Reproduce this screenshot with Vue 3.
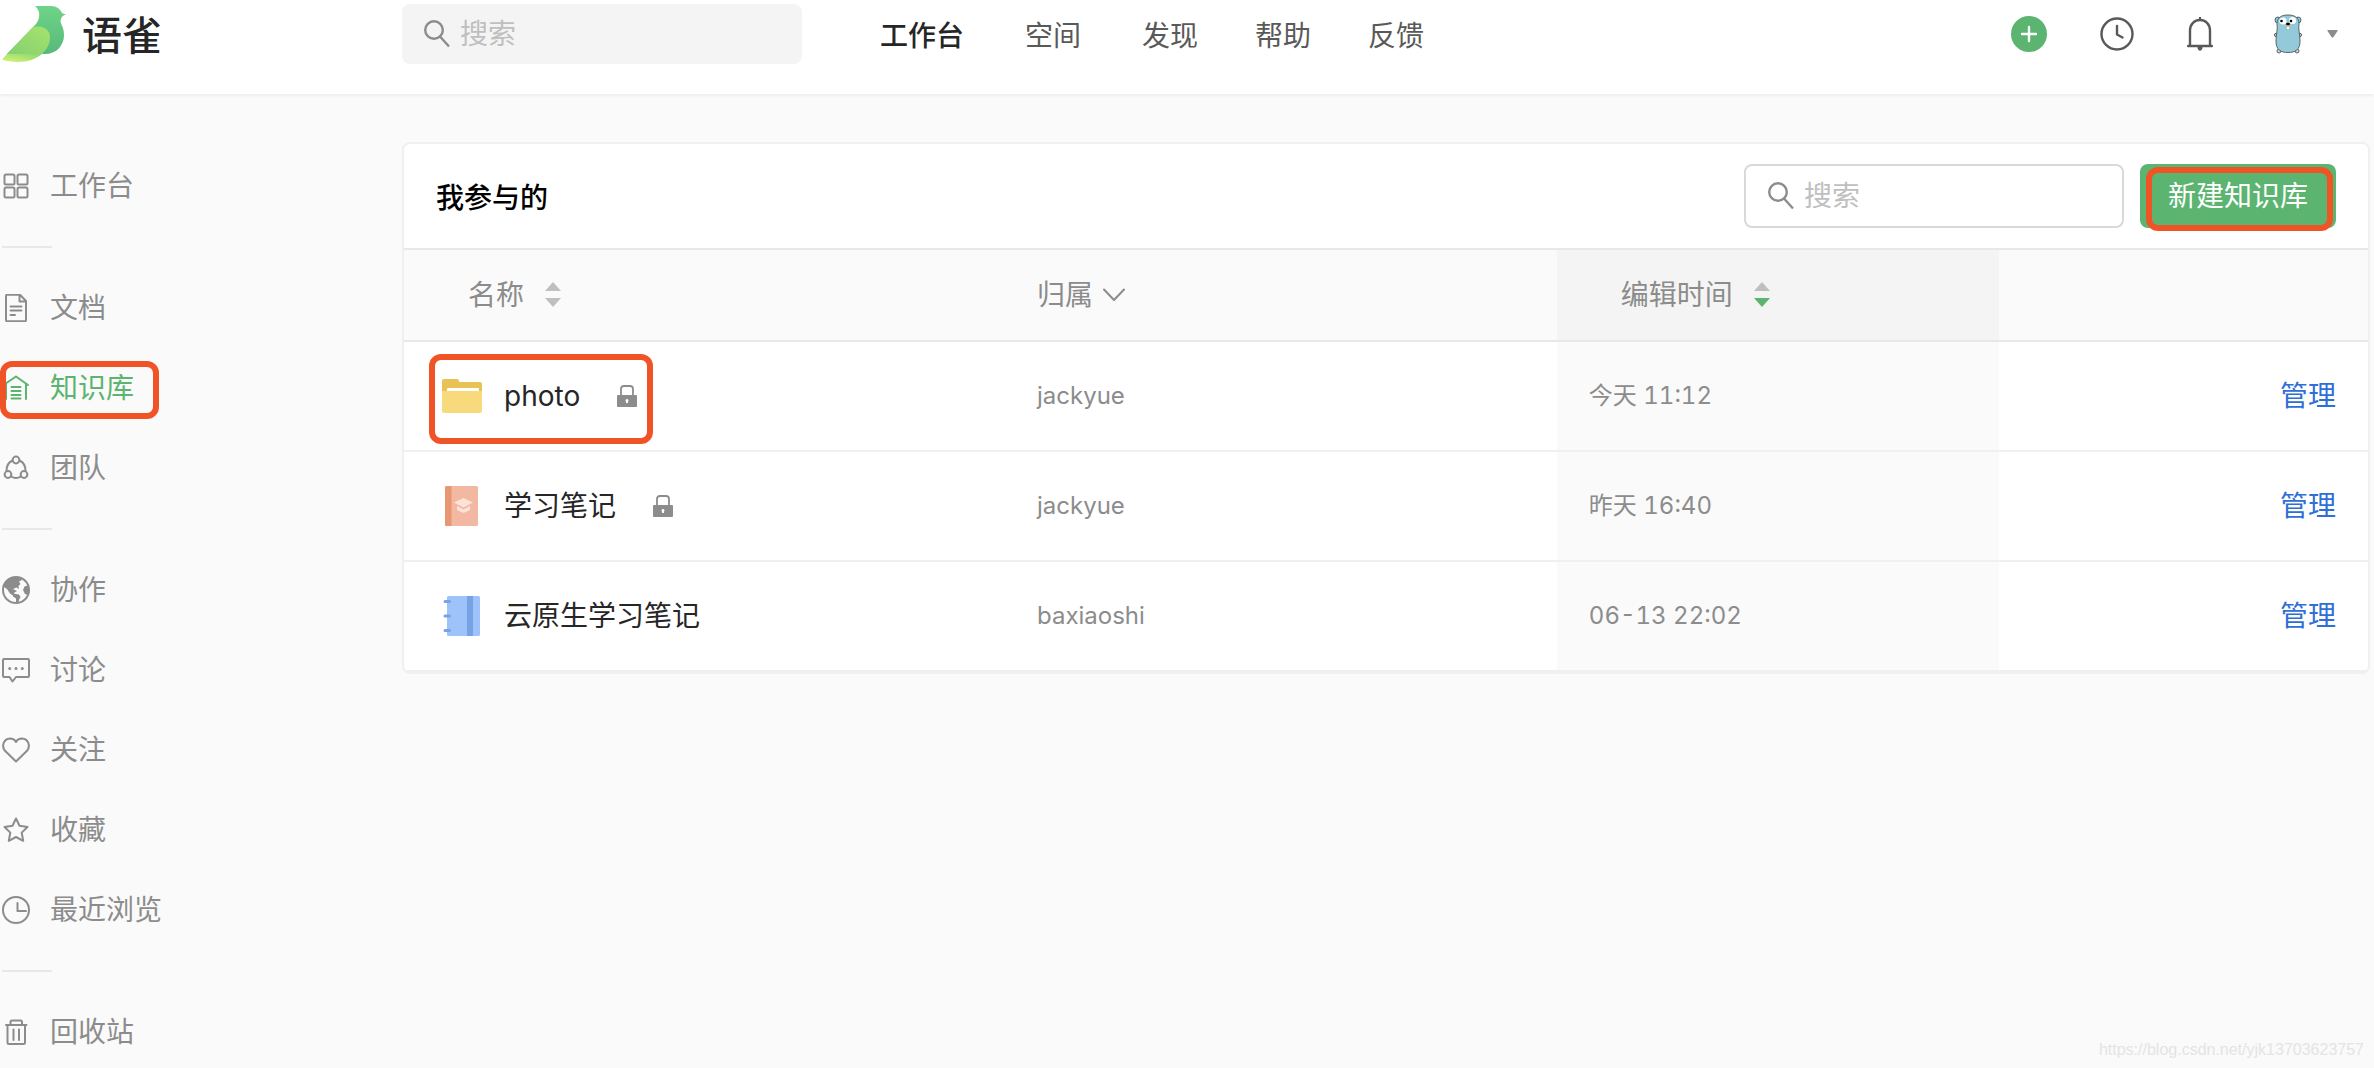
<script setup>
import { ref } from 'vue'

const nav = [
  { label: '工作台', active: true },
  { label: '空间', wide: true },
  { label: '发现' },
  { label: '帮助' },
  { label: '反馈' },
]

const groups = [
  [{ label: '工作台', icon: 'grid' }],
  [
    { label: '文档', icon: 'doc' },
    { label: '知识库', icon: 'repo', active: true },
    { label: '团队', icon: 'team' },
  ],
  [
    { label: '协作', icon: 'globe' },
    { label: '讨论', icon: 'chat' },
    { label: '关注', icon: 'heart' },
    { label: '收藏', icon: 'star' },
    { label: '最近浏览', icon: 'recent' },
  ],
  [{ label: '回收站', icon: 'trash' }],
]

const repos = [
  { name: 'photo', icon: 'folder', locked: true, owner: 'jackyue', time: '今天 11:12', marked: true },
  { name: '学习笔记', icon: 'book', locked: true, owner: 'jackyue', time: '昨天 16:40' },
  { name: '云原生学习笔记', icon: 'notebook', locked: false, owner: 'baxiaoshi', time: '06-13 22:02' },
]

const siteQuery = ref('')
const repoQuery = ref('')
</script>

<template>
  <div class="page">
    <header class="header">
      <a class="brand" href="#">
        <svg class="brand-mark" viewBox="0 0 64 56" aria-hidden="true">
          <defs>
            <linearGradient id="bird-body" x1="0" y1="0" x2="0" y2="1">
              <stop offset="0" stop-color="#6fd487" />
              <stop offset="1" stop-color="#57b97c" />
            </linearGradient>
            <linearGradient id="bird-tail" x1="0" y1="1" x2="1" y2="0">
              <stop offset="0" stop-color="#dcf27a" />
              <stop offset="1" stop-color="#86d86c" />
            </linearGradient>
            <linearGradient id="bird-wing" x1="0" y1="1" x2="1" y2="0">
              <stop offset="0" stop-color="#86cf70" />
              <stop offset="1" stop-color="#a5e36c" />
            </linearGradient>
          </defs>
          <path fill="url(#bird-body)" d="M33 0H49C55 0 58 3 60 7C61 8 63 8 64 8.500C61 9 59 11 58.500 15C58.500 18 62 21 62 29C62 40 54 48 43 48H5L34 18C38 13 39 5 33 0Z" />
          <path fill="url(#bird-tail)" d="M5 48L0 53.500C3 55 10 56 16 56C26 56 34 53 40 48Z" />
          <path fill="url(#bird-wing)" d="M5 48L30 22C37 18 48 22 48 31C48 38 45 43 40 48Z" />
        </svg>
        <span class="brand-name">语雀</span>
      </a>

      <label class="search search-site">
        <svg class="i-search" viewBox="0 0 26 28" aria-hidden="true">
          <circle cx="10" cy="10" r="8.800" />
          <path d="M16 16.500L25 26.500" />
        </svg>
        <input v-model="siteQuery" type="text" placeholder="搜索" aria-label="搜索" />
      </label>

      <nav class="nav">
        <a v-for="n in nav" :key="n.label" href="#" :class="{ active: n.active, wide: n.wide }">{{ n.label }}</a>
      </nav>

      <div class="tools">
        <button type="button" aria-label="新建">
          <svg width="36" height="36" viewBox="0 0 36 36">
            <circle cx="18" cy="18" r="18" fill="#5bb46f" />
            <path d="M18 11V25M11 18H25" stroke="#fff" stroke-width="2.400" stroke-linecap="round" />
          </svg>
        </button>
        <button type="button" aria-label="历史">
          <svg class="line dark" width="34" height="34" viewBox="0 0 34 34">
            <circle cx="17" cy="17" r="15.500" />
            <path d="M17 9V17.500L22.500 20.500" />
          </svg>
        </button>
        <button type="button" aria-label="通知">
          <svg class="line dark" width="26" height="34" viewBox="0 0 26 34">
            <path d="M3 29V13.500C3 7 7.500 3 13 3S23 7 23 13.500V29M1 29H25M13 1V3" />
            <path d="M10.500 30C10.500 35 15.500 35 15.500 30Z" fill="#595959" stroke="none" />
          </svg>
        </button>
        <button type="button" class="account" aria-label="账户">
          <svg width="28" height="40" viewBox="0 0 28 40">
            <g stroke="#54646b" stroke-width="1">
              <circle cx="4" cy="6" r="3" fill="#93c9d9" />
              <circle cx="24" cy="6" r="3" fill="#93c9d9" />
              <circle cx="2" cy="21" r="1.600" fill="#e8cfa8" />
              <circle cx="26" cy="21" r="1.600" fill="#e8cfa8" />
              <circle cx="5" cy="37" r="2" fill="#e8cfa8" />
              <circle cx="23" cy="37" r="2" fill="#e8cfa8" />
              <path d="M3 10C3 3 8 1 14 1S25 3 25 10C24 15 26 20 26 27C26 36 21 38.500 14 38.500S2 36 2 27C2 20 4 15 3 10Z" fill="#93c9d9" />
            </g>
            <circle cx="9" cy="7" r="3.600" fill="#fff" />
            <circle cx="18.500" cy="6.500" r="3.600" fill="#fff" />
            <circle cx="7.500" cy="7" r="1.300" />
            <circle cx="17" cy="7" r="1.300" />
            <ellipse cx="14" cy="12" rx="2.600" ry="1.600" fill="#d9b98c" />
            <rect x="13" y="13" width="2" height="2" fill="#fff" />
            <ellipse cx="14" cy="10" rx="2" ry="1.200" />
          </svg>
          <svg width="11" height="8" viewBox="0 0 11 8">
            <path d="M1 0H10Q11 0 10.500 1L6.500 7Q5.500 8 4.500 7L.5 1Q0 0 1 0Z" fill="#8c8c8c" />
          </svg>
        </button>
      </div>
    </header>

    <div class="body">
      <aside class="side">
        <ul v-for="(g, gi) in groups" :key="gi">
          <li v-for="it in g" :key="it.label">
            <a href="#" :class="{ active: it.active }">
              <svg class="line side-icon" viewBox="0 0 28 28" aria-hidden="true">
                <g v-if="it.icon === 'grid'">
                  <rect x="2.500" y="2.500" width="10" height="10" rx="1.500" />
                  <rect x="15.500" y="2.500" width="10" height="10" rx="1.500" />
                  <rect x="2.500" y="15.500" width="10" height="10" rx="1.500" />
                  <rect x="15.500" y="15.500" width="10" height="10" rx="1.500" />
                </g>
                <g v-else-if="it.icon === 'doc'">
                  <path d="M4 2Q4 .8 5 .8H18L24 7V26Q24 27.200 23 27.200H5Q4 27.200 4 26ZM17.500 1V7.500H24" />
                  <path d="M8.500 12.500H19.500M8.500 16.500H19.500M8.500 21H13" />
                </g>
                <g v-else-if="it.icon === 'repo'">
                  <path d="M1.500 11L14 2.500L26 11M4 9.500V25M24 9.500V25" />
                  <path d="M9.500 13H18.500M9.500 17H18.500M9.500 21H18.500M9.500 24.500H18.500" />
                </g>
                <g v-else-if="it.icon === 'team'">
                  <circle cx="14" cy="6" r="3.400" />
                  <circle cx="6" cy="20.500" r="3.400" />
                  <circle cx="22" cy="20.500" r="3.400" />
                  <path d="M10.500 6.500C6 8.500 4.500 12 4.500 17M17.500 6.500C22 8.500 23.500 12 23.500 17M9 22.500C12 24.300 16 24.300 19 22.500" />
                </g>
                <g v-else-if="it.icon === 'globe'">
                  <circle cx="14" cy="14" r="13" />
                  <path class="solid" d="M1 14C1 5 9 0 17 1.500L20 4L17 5.500L18.500 8L16.500 10L17 13L14.500 11.500L11 13L15 15L12 17L11.500 20L8 17.500L5 13L2 11Z" />
                  <path class="solid" d="M11 17.500L17 18.500L18.500 21L17 24L16.500 27L14 27.500L14 22.500L11 20.500ZM27 9L22.500 10.500L21 14L23 18L26 19Z" />
                </g>
                <g v-else-if="it.icon === 'chat'">
                  <path d="M2 3H26Q27 3 27 4V20Q27 21 26 21H14L10.500 25.500L7.500 21H2Q1 21 1 20V4Q1 3 2 3Z" />
                  <path class="dots" d="M7.700 12.500H7.710M14 12.500H14.010M20.300 12.500H20.310" />
                </g>
                <g v-else-if="it.icon === 'heart'">
                  <path d="M14 25.500L3 14.800C-.5 10.500 1 3 8 2.500C11 2.500 13 4 14 6C15 4 17 2.500 20 2.500C27 3 28.500 10.500 25 14.800Z" />
                </g>
                <g v-else-if="it.icon === 'star'">
                  <path d="M14 2.500L17.500 9.800L25.500 11L19.700 16.600L21.200 24.800L14 21L6.800 24.800L8.300 16.600L2.500 11L10.500 9.800Z" />
                </g>
                <g v-else-if="it.icon === 'recent'">
                  <circle cx="14" cy="14" r="13" />
                  <path d="M15.500 7V15H24" />
                </g>
                <g v-else>
                  <path d="M4 7H24.500M8.500 7V4Q8.500 2.500 10 2.500H18.500Q20 2.500 20 4V7M5.500 7V24.500Q5.500 26 7 26H21.500Q23 26 23 24.500V7M11.500 11.500V22M17 11.500V22" />
                </g>
              </svg>
              <span>{{ it.label }}</span>
            </a>
            <i v-if="it.active" class="mark mark-side"></i>
          </li>
        </ul>
      </aside>

      <main class="card">
        <div class="card-head">
          <h1>我参与的</h1>
          <label class="search search-repo">
            <svg class="i-search" viewBox="0 0 26 28" aria-hidden="true">
              <circle cx="10" cy="10" r="8.800" />
              <path d="M16 16.500L25 26.500" />
            </svg>
            <input v-model="repoQuery" type="text" placeholder="搜索" aria-label="搜索知识库" />
          </label>
          <div class="create">
            <button type="button">新建知识库</button>
            <i class="mark mark-create"></i>
          </div>
        </div>

        <table>
          <colgroup>
            <col class="c-name" />
            <col class="c-owner" />
            <col class="c-time" />
            <col />
          </colgroup>
          <thead>
            <tr>
              <th class="indent">
                <span class="th">名称
                  <svg class="sort" viewBox="0 0 16 26"><path d="M8 0L16 9H0Z" /><path d="M0 16H16L8 25Z" /></svg>
                </span>
              </th>
              <th>
                <span class="th th-filter">归属
                  <svg class="line" width="22" height="14" viewBox="0 0 22 14"><path d="M1 1.500L11 12L21 1.500" /></svg>
                </span>
              </th>
              <th class="indent sorted">
                <span class="th">编辑时间
                  <svg class="sort" viewBox="0 0 16 26"><path d="M8 0L16 9H0Z" /><path class="on" d="M0 16H16L8 25Z" /></svg>
                </span>
              </th>
              <th></th>
            </tr>
          </thead>
          <tbody>
            <tr v-for="r in repos" :key="r.name">
              <td class="name">
                <div class="repo">
                  <svg class="repo-icon" viewBox="0 0 40 40" aria-hidden="true">
                    <g v-if="r.icon === 'folder'">
                      <path fill="#e8c255" d="M0 5Q0 3 2 3H15Q17 3 17 6H38Q40 6 40 8V20H0Z" />
                      <rect x="5" y="12" width="32" height="6" rx="1" fill="#fff" />
                      <path fill="#f8da7c" d="M0 15H40V35Q40 37 38 37H2Q0 37 0 35Z" />
                    </g>
                    <g v-else-if="r.icon === 'book'">
                      <rect x="3" y="0" width="33" height="40" rx="1.500" fill="#f3b8a1" />
                      <path d="M4.500 0H9.500V40H4.500Q3 40 3 38.500V1.500Q3 0 4.500 0Z" fill="#e99673" />
                      <path d="M12 16.500L21.500 12L31 16.500L21.500 21.500ZM15 20L21.500 23.500L28 20V24L21.500 27L15 24Z" fill="#fbe3d9" />
                    </g>
                    <g v-else>
                      <rect x="5" y="0" width="33" height="40" rx="1.500" fill="#9dc3fa" />
                      <rect x="25" y="0" width="6" height="40" fill="#77a3e6" />
                      <path d="M3 5.500H7.500M3 20H7.500M3 34.500H7.500" stroke="#77a3e6" stroke-width="3" stroke-linecap="round" />
                    </g>
                  </svg>
                  <a href="#">{{ r.name }}</a>
                  <svg v-if="r.locked" class="lock" viewBox="0 0 20 22" aria-label="私密">
                    <path d="M4 10V4Q4 1 7 1H13Q16 1 16 4V10" fill="none" stroke="#8c8c8c" stroke-width="1.800" />
                    <path fill="#8c8c8c" fill-rule="evenodd" d="M1 10H19Q20 10 20 11V21Q20 22 19 22H1Q0 22 0 21V11Q0 10 1 10ZM10 14A1.500 1.500 0 0 0 9 16.600V18H11V16.600A1.500 1.500 0 0 0 10 14Z" />
                  </svg>
                  <i v-if="r.marked" class="mark mark-repo"></i>
                </div>
              </td>
              <td>{{ r.owner }}</td>
              <td class="sorted">{{ r.time }}</td>
              <td class="ops"><a href="#">管理</a></td>
            </tr>
          </tbody>
        </table>
      </main>
    </div>

    <div class="watermark">https://blog.csdn.net/yjk13703623757</div>
  </div>
</template>

<style>
body {
  margin: 0;
  background: #fafafa;
}
</style>

<style scoped>
.page {
  position: relative;
  min-height: 100vh;
  font-family: Inter, "Noto Sans CJK SC", sans-serif;
  font-size: 28px;
  line-height: 48px;
  color: #262626;
}
a {
  color: inherit;
  text-decoration: none;
}
button {
  display: flex;
  align-items: center;
  border: 0;
  padding: 0;
  background: none;
  font: inherit;
  cursor: pointer;
}
svg {
  display: block;
  flex: none;
}
.line {
  fill: none;
  stroke: currentColor;
  stroke-width: 2;
  stroke-linecap: round;
  stroke-linejoin: round;
}
.dark {
  color: #595959;
  stroke-width: 2.4;
}

.header {
  display: flex;
  align-items: center;
  height: 68px;
  padding: 0 36px 26px 2px;
  background: #fff;
  box-shadow: 0 1px 4px rgba(0, 0, 0, 0.08);
}
.brand {
  display: flex;
  align-items: center;
  gap: 16px;
  width: 400px;
}
.brand-mark {
  width: 64px;
  height: 56px;
}
.brand-name {
  padding-top: 4px;
  font-size: 40px;
  font-weight: 500;
}
.search {
  display: flex;
  align-items: center;
  gap: 10px;
  box-sizing: border-box;
  border-radius: 8px;
}
.search input {
  flex: 1;
  min-width: 0;
  padding: 0;
  border: 0;
  outline: 0;
  background: none;
  font: inherit;
  color: #262626;
}
.search input::placeholder {
  color: #bfbfbf;
  opacity: 1;
}
.i-search {
  width: 26px;
  height: 28px;
  fill: none;
  stroke: #8c8c8c;
  stroke-width: 2.4;
}
.search-site {
  width: 400px;
  height: 60px;
  padding: 0 22px;
  background: #f4f4f4;
}
.nav {
  display: flex;
  gap: 57px;
  margin-left: 78px;
  padding-top: 4px;
  color: #595959;
}
.nav .active {
  color: #262626;
  font-weight: 500;
}
.nav .active,
.nav .wide {
  padding-right: 4px;
}
.tools {
  display: flex;
  align-items: center;
  gap: 53px;
  margin-left: auto;
}
.account {
  gap: 25px;
  margin-left: 8px;
}

.body {
  display: flex;
  align-items: flex-start;
}
.side {
  width: 402px;
  flex: none;
  padding-top: 68px;
  color: #8c8c8c;
}
.side ul {
  display: flex;
  flex-direction: column;
  gap: 32px;
  margin: 0;
  padding: 0;
  list-style: none;
}
.side ul + ul::before {
  content: "";
  width: 50px;
  height: 2px;
  margin: 36px 0 4px 2px;
  background: #e8e8e8;
}
.side li {
  position: relative;
}
.side li a {
  display: flex;
  align-items: center;
  gap: 20px;
  padding-left: 2px;
}
.side .active {
  color: #5bb46f;
}
.side-icon {
  width: 28px;
  height: 28px;
}
.solid {
  fill: currentColor;
  stroke: none;
}
.dots {
  stroke-width: 3;
}

.card {
  flex: 1;
  min-width: 0;
  margin: 48px 4px 0 0;
  border: 2px solid #f0f0f0;
  border-radius: 8px;
  background: #fff;
}
.card-head {
  display: flex;
  align-items: center;
  height: 104px;
  padding: 0 32px;
  border-bottom: 2px solid #e8e8e8;
}
.card-head h1 {
  flex: 1;
  margin: 0;
  padding-top: 4px;
  font-size: 28px;
  font-weight: 500;
  color: #000;
}
.search-repo {
  width: 380px;
  height: 64px;
  padding: 0 22px;
  border: 2px solid #d9d9d9;
}
.create {
  position: relative;
  margin-left: 16px;
}
.create button {
  height: 64px;
  padding: 0 28px;
  border-radius: 8px;
  background: #5bb46f;
  color: #fff;
}

table {
  width: 100%;
  table-layout: fixed;
  border-spacing: 0;
}
.c-name {
  width: 30.6%;
}
.c-owner {
  width: 28.1%;
}
.c-time {
  width: 22.5%;
}
th {
  height: 90px;
  padding: 0 32px;
  border-bottom: 2px solid #e8e8e8;
  background: #fafafa;
  color: #8c8c8c;
  font-weight: 400;
  text-align: left;
}
.indent {
  padding-left: 64px;
}
th.sorted {
  background: #f4f4f4;
}
.th {
  display: flex;
  align-items: center;
  gap: 21px;
}
.th-filter {
  gap: 10px;
}
.sort {
  width: 16px;
  height: 26px;
  fill: #bfbfbf;
}
.sort .on {
  fill: #5bb46f;
}
td {
  height: 108px;
  padding: 0 32px;
  border-bottom: 2px solid #f0f0f0;
  color: #8c8c8c;
  font-size: 24px;
}
td.sorted {
  background: #fafafa;
  font-variant-numeric: tabular-nums;
}
td.name {
  padding-left: 38px;
  color: #262626;
  font-size: 28px;
}
.repo {
  position: relative;
  display: flex;
  align-items: center;
}
.repo a {
  margin: 0 37px 0 22px;
}
.repo-icon {
  width: 40px;
  height: 40px;
}
.lock {
  width: 20px;
  height: 22px;
}
.ops {
  color: #2f6fd6;
  font-size: 28px;
  text-align: right;
}

.mark {
  position: absolute;
  box-sizing: border-box;
  border: 6px solid #f05426;
  border-radius: 12px;
  pointer-events: none;
}
.mark-side {
  top: -3px;
  left: 0;
  width: 159px;
  height: 58px;
}
.mark-create {
  inset: 3px 3px -3px 6px;
}
.mark-repo {
  top: -18px;
  left: -13px;
  width: 224px;
  height: 90px;
}
.watermark {
  position: absolute;
  right: 10px;
  bottom: 6px;
  font: 16px/24px "Liberation Sans", sans-serif;
  color: #e4e4e4;
}
</style>
